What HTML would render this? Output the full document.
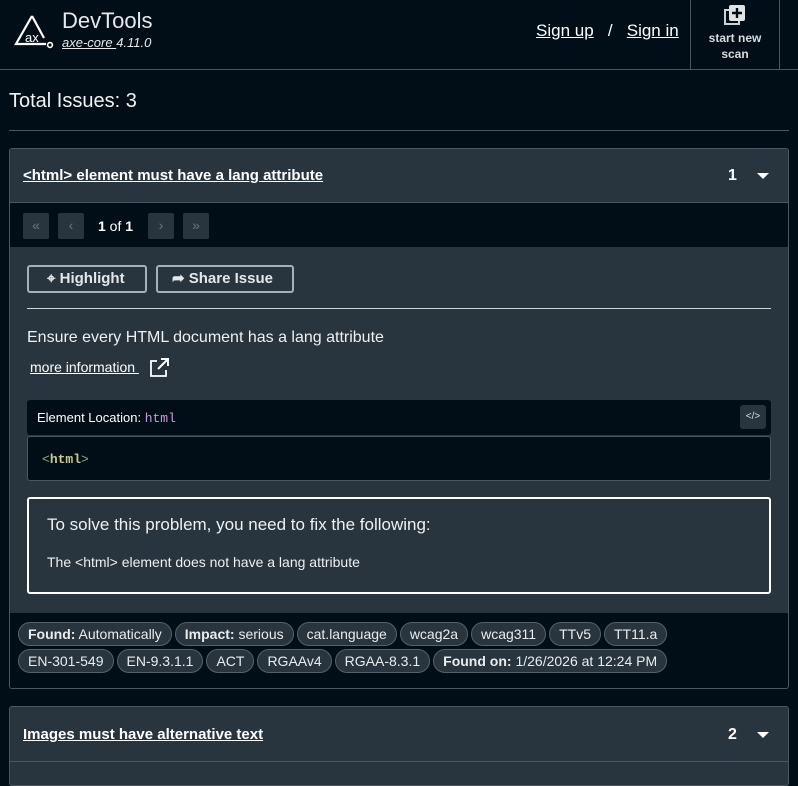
<!DOCTYPE html>
<html style="background:#020e17"><head><style>
*{box-sizing:border-box;margin:0;padding:0}
html,body{width:798px;height:765px}
body{background:#020e17;font-family:"Liberation Sans",sans-serif;color:#fff;overflow:hidden;position:relative}
.abs{position:absolute}
a{color:#fff}
.hdr{left:0;top:0;width:798px;height:70px;border-bottom:1px solid #4b565f}
.card{left:9px;width:780px;border:1px solid #4b565f;border-radius:3px;overflow:hidden}
.pb{position:absolute;top:10px;width:26px;height:26px;background:#28343e;border-radius:2px;color:#6b7680;font-size:14px;text-align:center;line-height:25px}
.btn{position:absolute;top:18px;height:28px;border:2px solid #a7b0b6;border-radius:3px;font-weight:bold;font-size:15px;line-height:24px;color:#e4e8ea}
.tag{display:inline-block;height:24px;border:1px solid #56616a;border-radius:12px;background:#28343e;padding:0 9px;font-size:14px;line-height:22px;margin:0 3px 3px 0;color:#e8ecee}
</style></head><body>
<div class="abs hdr"></div>
<svg class="abs" style="left:14px;top:14px" width="40" height="36" viewBox="0 0 40 36"><path d="M18 2 L2 30 H32" fill="none" stroke="#fff" stroke-width="2.2"/><path d="M18 2 L30 24" fill="none" stroke="#fff" stroke-width="2.2"/><circle cx="36" cy="31" r="2.4" fill="none" stroke="#fff" stroke-width="1.6"/><text x="11" y="28" font-size="13" fill="#fff" font-family="Liberation Sans">ax</text></svg>
<div class="abs" style="left:62px;top:8px;font-size:22px;color:#e6e9eb">DevTools</div>
<div class="abs" style="left:62px;top:35px;font-size:13px;font-style:italic;color:#e6e9eb"><u>axe-core </u>4.11.0</div>
<div class="abs" style="left:536px;top:21px;font-size:17px"><u>Sign up</u>&nbsp;&nbsp; / &nbsp;&nbsp;<u>Sign in</u></div>
<div class="abs" style="left:690px;top:0;width:90px;height:70px;border-left:1px solid #4b565f;border-right:1px solid #4b565f"></div>
<svg class="abs" style="left:723px;top:4px" width="24" height="24" viewBox="0 0 24 24"><rect x="2" y="6" width="14" height="14" fill="none" stroke="#ccd2d6" stroke-width="2"/><rect x="6" y="1" width="16" height="16" rx="2" fill="#dfe3e6"/><path d="M14 4v10M9 9h10" stroke="#020e17" stroke-width="2.4"/></svg>
<div class="abs" style="left:690px;top:30px;width:90px;text-align:center;font-size:12px;font-weight:bold;line-height:16px;color:#d6dbde">start new<br>scan</div>
<div class="abs" style="left:9px;top:90px;font-size:20px;color:#f0f2f3">Total Issues: 3</div>
<div class="abs" style="left:9px;top:130px;width:780px;height:1px;background:#4b565f"></div>

<div class="abs card" style="top:148px;height:541px">
 <div style="height:54px;background:#28343e;border-bottom:1px solid #4b565f;position:relative">
  <div class="abs" style="left:13px;top:18px;font-size:15px;font-weight:bold"><u>&lt;html&gt; element must have a lang attribute</u></div>
  <div class="abs" style="left:718px;top:18px;font-size:16px;font-weight:bold">1</div>
  <div class="abs" style="left:747px;top:24px;border-left:6px solid transparent;border-right:6px solid transparent;border-top:6px solid #fff"></div>
 </div>
 <div style="height:44px;position:relative">
  <div class="pb" style="left:13px">«</div><div class="pb" style="left:48px">‹</div>
  <div class="abs" style="left:88px;top:15px;font-size:14px"><b>1</b> of <b>1</b></div>
  <div class="pb" style="left:138px">›</div><div class="pb" style="left:173px">»</div>
 </div>
 <div style="height:366px;background:#28343e;position:relative">
  <div class="btn" style="left:17px;width:120px;padding-left:18px">⌖ Highlight</div>
  <div class="btn" style="left:146px;width:138px;padding-left:14px">➦ Share Issue</div>
  <div class="abs" style="left:17px;top:61px;width:744px;height:1px;background:#d0d5d8"></div>
  <div class="abs" style="left:17px;top:82px;font-size:16px;color:#eef0f1">Ensure every HTML document has a lang attribute</div>
  <div class="abs" style="left:20px;top:112px;font-size:14px"><u>more information&nbsp;</u></div>
  <svg class="abs" style="left:138px;top:111px" width="22" height="20" viewBox="0 0 22 20"><path d="M9 3H3v15h15v-6" fill="none" stroke="#fff" stroke-width="1.8"/><path d="M10 11L19 2M13 1h7v7" fill="none" stroke="#fff" stroke-width="2"/></svg>
  <div class="abs" style="left:17px;top:153px;width:744px;height:35px;background:#020e17;border-radius:3px"></div>
  <div class="abs" style="left:27px;top:163px;font-size:13px">Element Location: <span style="font-family:'Liberation Mono',monospace;color:#c99ad8">html</span></div>
  <div class="abs" style="left:730px;top:158px;width:26px;height:24px;background:#28343e;border-radius:3px;font-size:10px;text-align:center;line-height:24px;color:#ddd">&lt;/&gt;</div>
  <div class="abs" style="left:17px;top:189px;width:744px;height:45px;background:#020e17;border:1px solid #4b565f;border-radius:3px"></div>
  <div class="abs" style="left:32px;top:205px;font-size:13px;font-family:'Liberation Mono',monospace;color:#9aa08a">&lt;<b style="color:#c8c98a">html</b>&gt;</div>
  <div class="abs" style="left:17px;top:250px;width:744px;height:97px;border:2px solid #fff;border-radius:3px"></div>
  <div class="abs" style="left:37px;top:268px;font-size:17px;color:#eef0f1">To solve this problem, you need to fix the following:</div>
  <div class="abs" style="left:37px;top:307px;font-size:14px;color:#eef0f1">The &lt;html&gt; element does not have a lang attribute</div>
 </div>
 <div style="padding:9px 0 0 8px">
  <span class="tag"><b>Found:</b> Automatically</span><span class="tag"><b>Impact:</b> serious</span><span class="tag">cat.language</span><span class="tag">wcag2a</span><span class="tag">wcag311</span><span class="tag">TTv5</span><span class="tag">TT11.a</span><br>
  <span class="tag">EN-301-549</span><span class="tag">EN-9.3.1.1</span><span class="tag">ACT</span><span class="tag">RGAAv4</span><span class="tag">RGAA-8.3.1</span><span class="tag"><b>Found on:</b> 1/26/2026 at 12:24 PM</span>
 </div>
</div>

<div class="abs card" style="top:706px;height:80px;background:#28343e">
 <div class="abs" style="left:13px;top:19px;font-size:15px;font-weight:bold"><u>Images must have alternative text</u></div>
 <div class="abs" style="left:718px;top:19px;font-size:16px;font-weight:bold">2</div>
 <div class="abs" style="left:747px;top:25px;border-left:6px solid transparent;border-right:6px solid transparent;border-top:6px solid #fff"></div>
 <div class="abs" style="left:0;top:54px;width:780px;height:1px;background:#4b565f"></div>
</div>
</body></html>
